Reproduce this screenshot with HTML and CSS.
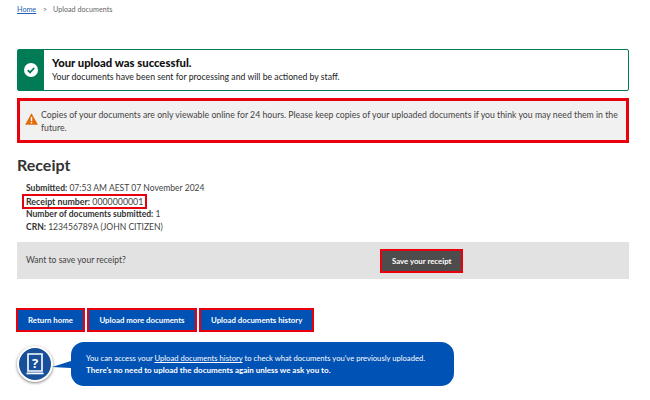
FILE: index.html
```html
<!DOCTYPE html>
<html lang="en-AU">

<head>
  <meta charset="UTF-8">
  <meta name="viewport" content="width=device-width, initial-scale=1.0">
  <title>Upload documents</title>
  <link rel="stylesheet" href="styles.css">
</head>

<body>
  <nav class="crumbs">
    <a href="#">Home</a>
    <span class="crumb-sep">&gt;</span>
    <span>Upload documents</span>
  </nav>

  <main class="content">
    <section class="success">
      <div class="success-icon">
        <svg width="14" height="14" viewBox="0 0 14 14">
          <circle cx="7" cy="7" r="7" fill="#fff" />
          <path d="M3.8 7.2l2.2 2.2 4.2-4.4" fill="none" stroke="#007b55" stroke-width="1.8" />
        </svg>
      </div>
      <div class="success-text">
        <h2>Your upload was successful.</h2>
        <p>Your documents have been sent for processing and will be actioned by staff.</p>
      </div>
    </section>

    <section class="warning marked">
      <svg class="warning-icon" width="13" height="12" viewBox="0 0 13 12">
        <path d="M6.5 0.3L12.9 11.7H0.1z" fill="#e36c0a" />
        <rect x="5.8" y="4" width="1.4" height="4.2" fill="#fff" />
        <rect x="5.8" y="9" width="1.4" height="1.4" fill="#fff" />
      </svg>
      <p>Copies of your documents are only viewable online for 24 hours. Please keep copies of your uploaded documents if you think you may need them in the future.</p>
    </section>

    <h1>Receipt</h1>
    <ul class="details">
      <li><b>Submitted:</b> 07:53 AM AEST 07 November 2024</li>
      <li><span class="receipt-no marked"><b>Receipt number:</b> 0000000001</span></li>
      <li><b>Number of documents submitted:</b> 1</li>
      <li><b>CRN:</b> 123456789A (JOHN CITIZEN)</li>
    </ul>

    <div class="save-box">
      <span>Want to save your receipt?</span>
      <button class="btn btn-grey marked" type="button">Save your receipt</button>
    </div>

    <div class="actions">
      <button class="btn btn-blue marked" type="button">Return home</button>
      <button class="btn btn-blue marked" type="button">Upload more documents</button>
      <button class="btn btn-blue marked" type="button">Upload documents history</button>
    </div>

    <div class="helper">
      <div class="helper-avatar">
        <svg width="30" height="30" viewBox="0 0 30 30">
          <path d="M8 5h14v17H8z" fill="none" stroke="#fff" stroke-width="1.6" />
          <path d="M6.5 23.5h17v1.8h-17z" fill="#fff" />
          <text x="15" y="18.5" text-anchor="middle" class="helper-q">?</text>
        </svg>
      </div>
      <div class="helper-tail"></div>
      <div class="helper-bubble">
        <p>You can access your <a href="#">Upload documents history</a> to check what documents you've previously uploaded.</p>
        <p><b>There's no need to upload the documents again unless we ask you to.</b></p>
      </div>
    </div>
  </main>
</body>

</html>
```

FILE: styles.css
```css
* {
  box-sizing: border-box;
}

body {
  margin: 0;
  font-family: Lato, "Open Sans", sans-serif;
  font-size: 8.72px;
  line-height: 13px;
  color: #444;
  background: #fff;
}

p {
  margin: 0;
}

.crumbs {
  padding: 3px 17px 0;
  height: 49px;
  font-size: 7.2px;
  color: #666;
}

.crumbs a {
  color: #1c5fb4;
}

.crumb-sep {
  margin: 0 4px 0 5px;
}

.content {
  padding: 0 21px 0 17px;
}

.marked {
  border: 3px solid #e8000d;
}

.success {
  display: flex;
  height: 42px;
  border: 1px solid #007b55;
  border-radius: 2px;
}

.success-icon {
  display: flex;
  align-items: center;
  justify-content: center;
  width: 26px;
  background: #007b55;
}

.success-icon svg {
  display: block;
}

.success-text {
  padding: 6px 8px;
  color: #222;
}

.success-text h2 {
  margin: 0;
  font-size: 11.3px;
  line-height: 14px;
  font-weight: 900;
  color: #111;
}

.success-text p {
  font-size: 8.7px;
}

.warning {
  display: flex;
  align-items: flex-start;
  gap: 3px;
  height: 45px;
  margin-top: 7px;
  padding: 6px 5px;
  background: #f1f1f1;
}

.warning-icon {
  flex: none;
  margin-top: 6px;
}

.warning p {
  margin-top: 1px;
}

h1 {
  margin: 11px 0 0;
  font-size: 16px;
  line-height: 22px;
  font-weight: 700;
  color: #333;
}

.details {
  list-style: none;
  margin: 6px 0 0;
  padding: 0 0 0 9px;
  font-size: 8.55px;
}

.details li {
  height: 13px;
}

.details b {
  color: #333;
}

.receipt-no {
  display: inline-block;
  margin: -1px 0 0 -4px;
  padding: 0 2px;
  font-size: 8.8px;
  line-height: 11px;
  border-width: 2px;
  height: 15px;
  white-space: nowrap;
}

.save-box {
  display: flex;
  align-items: center;
  height: 37px;
  margin-top: 8px;
  padding-left: 9px;
  font-size: 8.55px;
  background: #e2e2e2;
}

.btn {
  height: 24px;
  padding: 0 10px;
  font: 700 7.8px Lato, "Open Sans", sans-serif;
  color: #fff;
  border-width: 2px;
}

.btn-grey {
  margin-left: 254px;
  background: #4d4d4d;
}

.btn-blue {
  background: #0052b4;
}

.actions {
  display: flex;
  gap: 2.5px;
  margin: 29px 0 0 -1px;
}

.helper {
  display: flex;
  align-items: center;
  margin-top: 10px;
}

.helper-avatar {
  display: flex;
  align-items: center;
  justify-content: center;
  flex: none;
  width: 36px;
  height: 36px;
  border: 2px solid #fff;
  border-radius: 50%;
  background: #174f9a;
  box-shadow: 0 1px 3px rgba(0, 0, 0, 0.5);
}

.helper-q {
  font: 700 13px "Open Sans", sans-serif;
  fill: #fff;
}

.helper-tail {
  width: 0;
  height: 0;
  flex: none;
  margin-left: -1px;
  border-top: 6px solid transparent;
  border-bottom: 1px solid transparent;
  border-right: 19px solid #0052b4;
}

.helper-bubble {
  width: 383px;
  height: 44px;
  padding: 10px 0 0 15px;
  font-size: 7.65px;
  line-height: 12px;
  color: #fff;
  background: #0052b4;
  border-radius: 13px;
}

.helper-bubble b {
  font-size: 8px;
}

.helper-bubble a {
  color: #fff;
}
```
